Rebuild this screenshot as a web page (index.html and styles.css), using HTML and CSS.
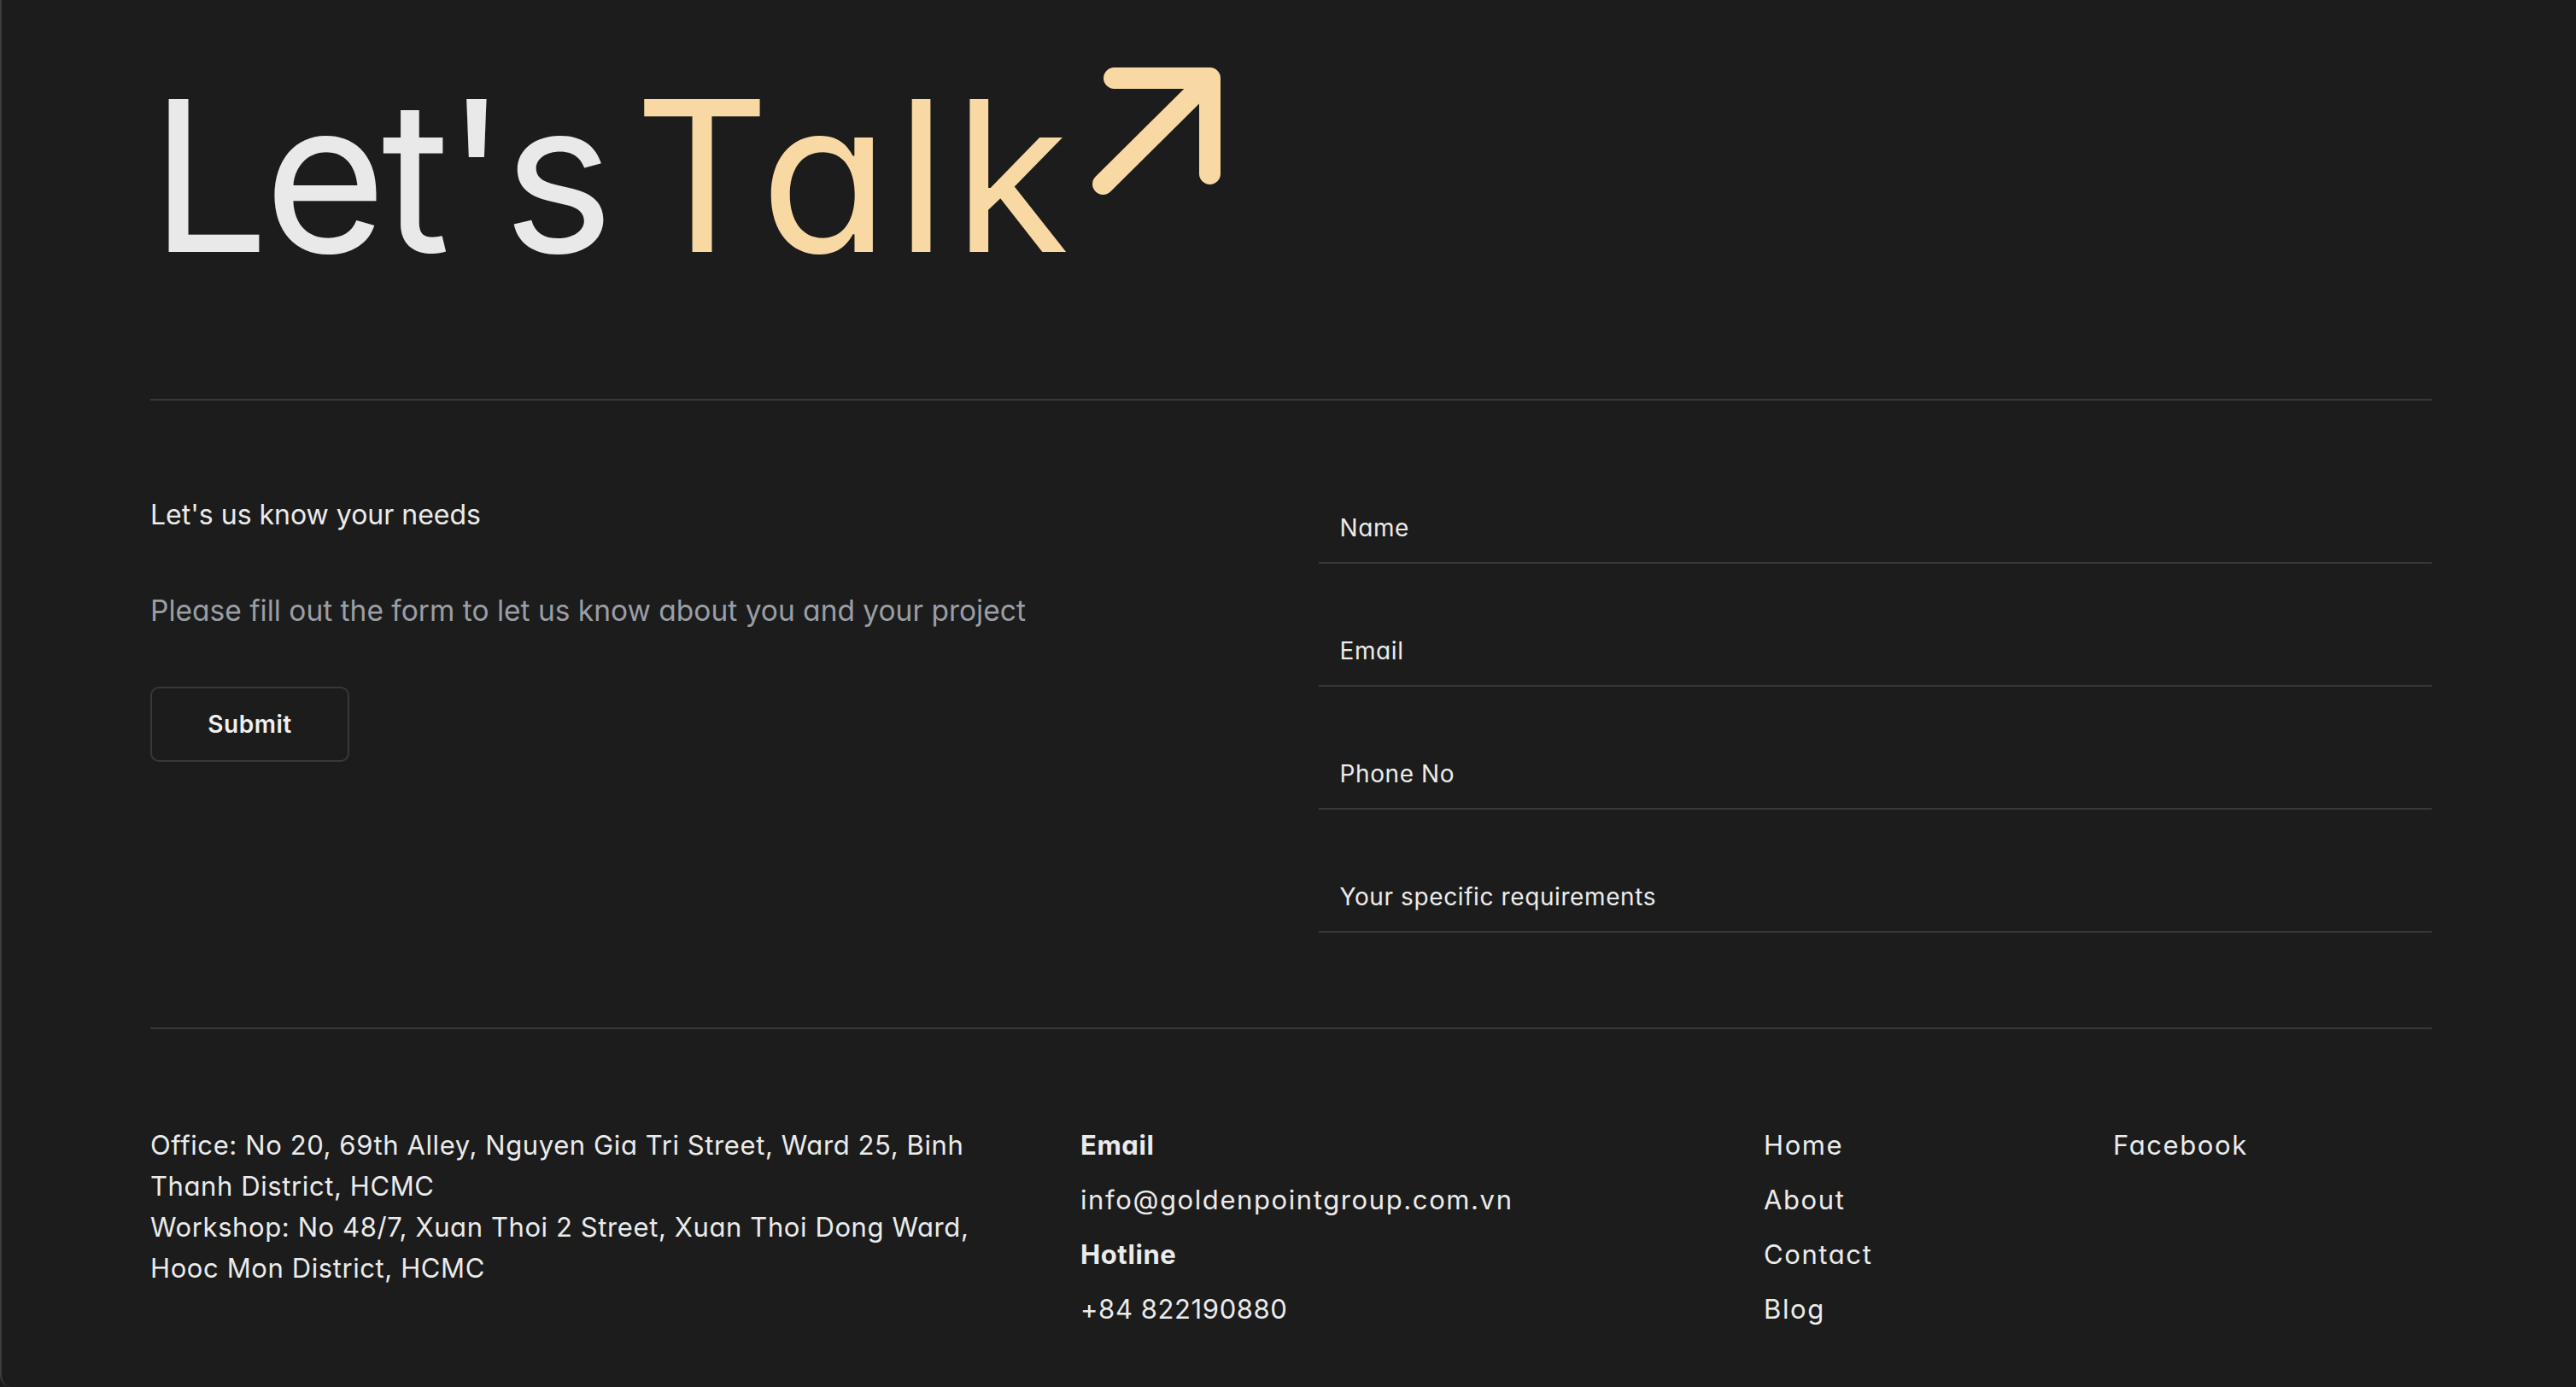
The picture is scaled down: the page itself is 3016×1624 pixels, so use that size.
FILE: index.html
```html
<!DOCTYPE html>
<html lang="en">
<head>
<meta charset="utf-8">
<title>Let's Talk</title>
<link rel="stylesheet" href="styles.css">
</head>
<body>
<div class="page">
  <header class="hero">
    <h1 class="hero-title">
      <span class="hero-white">Let's</span>
      <span class="hero-gold">Talk</span>
      <svg class="hero-arrow" viewBox="0 0 150 150" width="150" height="150" aria-hidden="true">
        <path d="M25.5 12.5 H137.5 V124.5 M12.5 136.5 L137.5 12.5" fill="none" stroke="#f8d9a3" stroke-width="25" stroke-linecap="round" stroke-linejoin="round"/>
      </svg>
    </h1>
  </header>

  <section class="contact">
    <div class="contact-intro">
      <h2 class="intro-title">Let's us know your needs</h2>
      <p class="intro-text">Please fill out the form to let us know about you and your project</p>
      <button class="submit-btn" type="button">Submit</button>
    </div>
    <form class="contact-form">
      <div class="field"><span class="field-label">Name</span></div>
      <div class="field"><span class="field-label">Email</span></div>
      <div class="field"><span class="field-label">Phone No</span></div>
      <div class="field"><span class="field-label">Your specific requirements</span></div>
    </form>
  </section>

  <footer class="footer">
    <div class="footer-address">
      <p>Office: No 20, 69th Alley, Nguyen Gia Tri Street, Ward 25, Binh Thanh District, HCMC</p>
      <p>Workshop: No 48/7, Xuan Thoi 2 Street, Xuan Thoi Dong Ward, Hooc Mon District, HCMC</p>
    </div>
    <ul class="footer-list">
      <li class="footer-strong">Email</li>
      <li>info@goldenpointgroup.com.vn</li>
      <li class="footer-strong">Hotline</li>
      <li class="footer-num">+84 822190880</li>
    </ul>
    <ul class="footer-list">
      <li>Home</li>
      <li>About</li>
      <li>Contact</li>
      <li>Blog</li>
    </ul>
    <ul class="footer-list">
      <li>Facebook</li>
    </ul>
  </footer>
</div>
</body>
</html>
```
FILE: styles.css
```css
html, body {
  margin: 0;
  padding: 0;
  background: #1c1c1c;
}

body {
  font-family: Inter, "Noto Sans", sans-serif;
  font-feature-settings: "cv11" 1;
  color: #ebebeb;
}

.page {
  min-height: 1624px;
  box-sizing: border-box;
  border-left: 2px solid #3b3b3b;
  border-bottom-left-radius: 14px;
  padding: 0 169px 0 174px;
}

.hero {
  padding-top: 83px;
  padding-bottom: 138px;
  border-bottom: 2px solid #383838;
}

.hero-title {
  margin: 0;
  display: flex;
  align-items: flex-start;
  font-size: 246px;
  line-height: 246px;
  font-weight: 400;
}

.hero-white {
  color: #e9e9e9;
  letter-spacing: -6px;
}

.hero-gold {
  color: #f8d9a3;
  margin-left: 30px;
  letter-spacing: 8px;
}

.hero-arrow {
  display: block;
  margin-top: -4px;
  margin-left: 20px;
  flex: none;
}

.contact {
  display: grid;
  grid-template-columns: 1fr 1fr;
  column-gap: 64px;
  margin-top: 47px;
  padding-bottom: 111px;
  border-bottom: 2px solid #383838;
}

.contact-intro {
  padding-top: 63px;
}

.intro-title {
  margin: 0;
  font-size: 32px;
  line-height: 48px;
  font-weight: 400;
  color: #ebebeb;
}

.intro-text {
  margin: 64px 0 0;
  font-size: 33.5px;
  line-height: 48px;
  color: #9a9ea6;
}

.submit-btn {
  margin-top: 65px;
  width: 233px;
  height: 88px;
  background: transparent;
  border: 2px solid #383838;
  border-radius: 10px;
  color: #f0f0f0;
  font-family: inherit;
  font-feature-settings: inherit;
  font-size: 28px;
  font-weight: 600;
  letter-spacing: 0.5px;
  padding: 0;
}

.contact-form {
  display: flex;
  flex-direction: column;
  margin: 0;
}

.field {
  padding: 81px 25px 19px;
  border-bottom: 2px solid #383838;
}

.field-label {
  display: block;
  font-size: 28px;
  line-height: 42px;
  letter-spacing: 0.6px;
  color: #ebebeb;
}

.footer {
  display: grid;
  grid-template-columns: 1089px 800px 409px 1fr;
  padding-top: 112px;
  font-size: 31px;
  line-height: 48px;
  letter-spacing: 1.6px;
}

.footer-address p {
  margin: 0;
  max-width: 1000px;
  letter-spacing: 0.6px;
}

.footer-list {
  list-style: none;
  margin: 0;
  padding: 0;
  display: flex;
  flex-direction: column;
  gap: 16px;
}

.footer-strong {
  font-weight: 700;
  letter-spacing: 0.6px;
}

.footer-num {
  letter-spacing: 0.6px;
}
```
